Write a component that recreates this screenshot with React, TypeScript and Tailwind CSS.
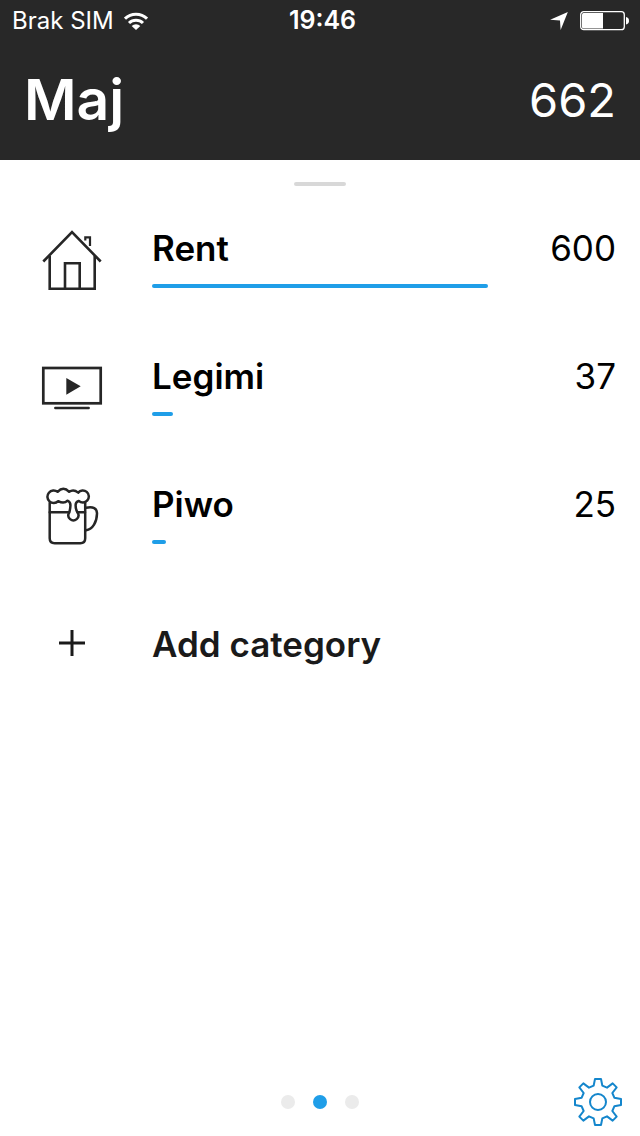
import type { ReactNode } from 'react';

interface Category {
  name: string;
  amount: number;
  icon: ReactNode;
}

function HouseIcon() {
  return (
    <svg viewBox="0 0 64 64" className="size-16" fill="none" stroke="currentColor" strokeWidth="2.6" aria-hidden="true">
      <path d="M3.3 33.5 32 4.2 60.7 33.5" />
      <path d="M9.7 28V60.7H54.7V28" />
      <path d="M25 60.7V35.3H39.7V60.7" />
      <path d="M45.3 12.5V9.3H50V18" strokeWidth="2.2" />
    </svg>
  );
}

function TvIcon() {
  return (
    <svg viewBox="0 0 64 64" className="size-16" fill="none" stroke="currentColor" strokeWidth="2.7" aria-hidden="true">
      <rect x="3.3" y="12" width="57.4" height="35.3" />
      <path d="M15.3 52H48.7" strokeLinecap="round" strokeWidth="2.4" />
      <path d="M26.3 22 40.7 30.3 26.3 38.7Z" fill="currentColor" stroke="none" />
    </svg>
  );
}

function BeerIcon() {
  return (
    <svg
      viewBox="0 0 64 64"
      className="size-16"
      fill="none"
      stroke="currentColor"
      strokeWidth="2.5"
      strokeLinecap="round"
      strokeLinejoin="round"
      aria-hidden="true"
    >
      <path d="M9.7 19V54.2Q9.7 59.2 14.7 59.2H40.3Q45.2 59.2 45.2 54.2V19" />
      <path d="M9.7 28.3H29M37.5 28.3H45" />
      <path d="M17.6 7.8A6.3 6.3 0 1 0 18.2 17.2Q24 20.2 27.5 16.7Q30.8 18 30.4 22Q30.2 25.5 29.2 28.6A5 5 0 1 0 37.6 28.6Q35.6 25.5 35.6 21Q35.6 18 38.8 16.9A6 6 0 1 0 38.2 8.6Q33.5 4.8 29.2 7.8Q23.3 1.8 17.6 7.8Z" />
      <path d="M46 23.8C53 22 57.2 24.5 57 29.5C56.8 38 53 45.2 46 46.3" />
    </svg>
  );
}

function PlusIcon() {
  return (
    <svg viewBox="0 0 64 64" className="size-16" fill="none" stroke="currentColor" strokeWidth="3" aria-hidden="true">
      <path d="M19 31H45M32 18V44" />
    </svg>
  );
}

function GearIcon() {
  return (
    <svg viewBox="-72 -72 144 144" className="size-12" fill="none" stroke="currentColor" strokeWidth="6" strokeLinejoin="round" aria-hidden="true">
      <path d="M-9-69H9L13-49 27-43 44-56 56-44 43-27 49-13 69-9V9L49 13 43 27 56 44 44 56 27 43 13 49 9 69H-9L-13 49-27 43-44 56-56 44-43 27-49 13-69 9V-9L-49-13-43-27-56-44-44-56-27-43-13-49Z" />
      <circle r="24" />
    </svg>
  );
}

function WifiIcon() {
  return (
    <svg viewBox="0 0 72 54" className="h-[18px] w-6" fill="none" stroke="currentColor" strokeWidth="9" aria-hidden="true">
      <path d="M3 20A47 47 0 0 1 69 20" />
      <path d="M15 33A30 30 0 0 1 57 33" />
      <path d="M36 54 23 42A18 18 0 0 1 49 42Z" fill="currentColor" stroke="none" />
    </svg>
  );
}

function LocationIcon() {
  return (
    <svg viewBox="0 0 54 55" className="size-[18px]" fill="currentColor" aria-hidden="true">
      <path d="M0 24 54 0 32 55 30 26Z" />
    </svg>
  );
}

function BatteryIcon() {
  return (
    <svg viewBox="0 0 49 20" className="h-5 w-[49px]" aria-hidden="true">
      <rect x="0.7" y="0.7" width="43.6" height="18" rx="3" fill="none" stroke="currentColor" strokeWidth="1.3" />
      <path d="M3.5 2H23V17.4H3.5Q2 17.4 2 15.9V3.5Q2 2 3.5 2Z" fill="currentColor" />
      <path d="M46 6Q49 6.6 49 9.7T46 13.4Z" fill="currentColor" />
    </svg>
  );
}

const CATEGORIES: Category[] = [
  { name: 'Rent', amount: 600, icon: <HouseIcon /> },
  { name: 'Legimi', amount: 37, icon: <TvIcon /> },
  { name: 'Piwo', amount: 25, icon: <BeerIcon /> },
];

const PAGES = ['Previous month', 'Current month', 'Next month'];

function StatusBar() {
  return (
    <div className="grid h-10 grid-cols-3 items-center pt-0.5 pr-[11px] pl-3 text-2xl">
      <div className="flex items-center gap-[10px]">
        <span className="whitespace-nowrap">Brak SIM</span>
        <WifiIcon />
      </div>
      <span className="pl-1 text-center text-[25px] font-semibold">19:46</span>
      <div className="flex items-center justify-end gap-3">
        <LocationIcon />
        <BatteryIcon />
      </div>
    </div>
  );
}

function CategoryRow({ category, max }: { category: Category; max: number }) {
  return (
    <li className="flex h-32 items-center gap-12 pr-6 pl-10">
      <span className="shrink-0 text-[#262626]">{category.icon}</span>
      <div className="h-16 flex-1">
        <div className="flex justify-between text-[35px] leading-10">
          <h2 className="font-semibold">{category.name}</h2>
          <span>{category.amount}</span>
        </div>
        <div className="mt-4 mr-32 h-1">
          <div
            className="h-full rounded-full bg-[#1f9ee8]"
            style={{ width: `${(category.amount / max) * 100}%` }}
          />
        </div>
      </div>
    </li>
  );
}

export default function App() {
  const total = CATEGORIES.reduce((sum, c) => sum + c.amount, 0);
  const max = Math.max(...CATEGORIES.map(c => c.amount));

  return (
    <div className="flex min-h-screen flex-col bg-white font-['Inter',sans-serif] text-black">
      <header className="bg-[#282828] text-white">
        <StatusBar />
        <div className="flex h-30 items-center justify-between px-6">
          <h1 className="text-[57px] font-semibold">Maj</h1>
          <span className="text-[47px]">{total}</span>
        </div>
      </header>

      <main className="flex-1">
        <div className="flex h-9 items-end justify-center pb-[10px]">
          <span className="h-1 w-13 rounded-full bg-[#d8d8d8]" />
        </div>
        <ul>
          {CATEGORIES.map(category => (
            <CategoryRow key={category.name} category={category} max={max} />
          ))}
        </ul>
        <button type="button" className="flex h-32 w-full items-center gap-12 pr-6 pl-10 text-left text-[35px] font-semibold text-[#1a1a1a]">
          <PlusIcon />
          Add category
        </button>
      </main>

      <footer className="grid h-[68px] grid-cols-3 items-center">
        <nav className="col-start-2 flex justify-center gap-[18px]">
          {PAGES.map((page, i) => (
            <button
              key={page}
              type="button"
              aria-label={page}
              className={`size-[14px] rounded-full ${i === 1 ? 'bg-[#1f9ee8]' : 'bg-[#ebebeb]'}`}
            />
          ))}
        </nav>
        <button type="button" aria-label="Settings" className="mr-[18px] justify-self-end text-[#1486cc]">
          <GearIcon />
        </button>
      </footer>
    </div>
  );
}
